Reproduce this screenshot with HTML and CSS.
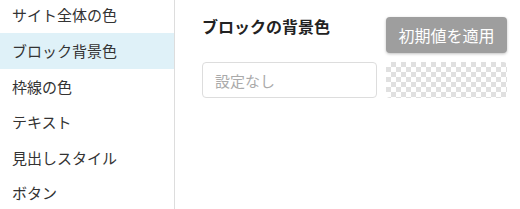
FILE: index.html
```html
<!DOCTYPE html>
<html lang="ja">
<head>
    <meta charset="UTF-8">
    <title>ブロック背景色</title>
    <link rel="stylesheet" href="styles.css">
</head>
<body>
    <div class="panel">
        <ul class="menu">
            <li class="menu-item">サイト全体の色</li>
            <li class="menu-item active">ブロック背景色</li>
            <li class="menu-item">枠線の色</li>
            <li class="menu-item">テキスト</li>
            <li class="menu-item">見出しスタイル</li>
            <li class="menu-item">ボタン</li>
        </ul>
        <div class="content">
            <div class="field">
                <h2 class="field-title">ブロックの背景色</h2>
                <button class="reset-btn">初期値を適用</button>
                <input class="color-input" type="text" placeholder="設定なし">
                <div class="swatch"></div>
            </div>
        </div>
    </div>
</body>
</html>
```

FILE: styles.css
```css
body {
    margin: 0;
    padding: 0;
    background: #fff;
    font-family: "Noto Sans CJK JP", "Noto Sans", sans-serif;
    color: #333;
    overflow: hidden;
}
.panel {
    display: flex;
    height: 209px;
}
.menu {
    list-style: none;
    margin: -3px 0 0 0;
    padding: 0;
    width: 174px;
    border-right: 1px solid #ddd;
    flex-shrink: 0;
}
.menu-item {
    height: 35.5px;
    line-height: 35.5px;
    padding-left: 12px;
    font-size: 15px;
}
.menu-item.active {
    background: #dff1f8;
    height: 36px;
}
.content {
    flex: 1;
    padding: 17px 13px 0 27px;
}
.field {
    display: grid;
    grid-template-columns: 175px 121px;
    justify-content: space-between;
    grid-template-rows: 36px 36px;
    row-gap: 9px;
}
.field-title {
    margin: 0;
    font-size: 16px;
    font-weight: bold;
    color: #222;
    align-self: center;
    white-space: nowrap;
    margin-top: -18px;
}
.reset-btn {
    border: none;
    border-radius: 4px;
    background: #9e9e9e;
    color: #fff;
    font-family: inherit;
    font-size: 16px;
    padding: 0;
    box-shadow: 0 1px 3px rgba(0, 0, 0, 0.25);
}
.color-input {
    box-sizing: border-box;
    width: 100%;
    height: 36px;
    border: 1px solid #ddd;
    border-radius: 4px;
    padding: 0 12px;
    font-family: inherit;
    font-size: 15px;
    color: #333;
}
.color-input::placeholder {
    color: #aaa;
}
.swatch {
    border-radius: 4px;
    background-color: #fff;
    background-image:
        linear-gradient(45deg, #e0e0e0 25%, transparent 25%, transparent 75%, #e0e0e0 75%),
        linear-gradient(45deg, #e0e0e0 25%, transparent 25%, transparent 75%, #e0e0e0 75%);
    background-size: 10px 10px;
    background-position: 0 0, 5px 5px;
}
```
